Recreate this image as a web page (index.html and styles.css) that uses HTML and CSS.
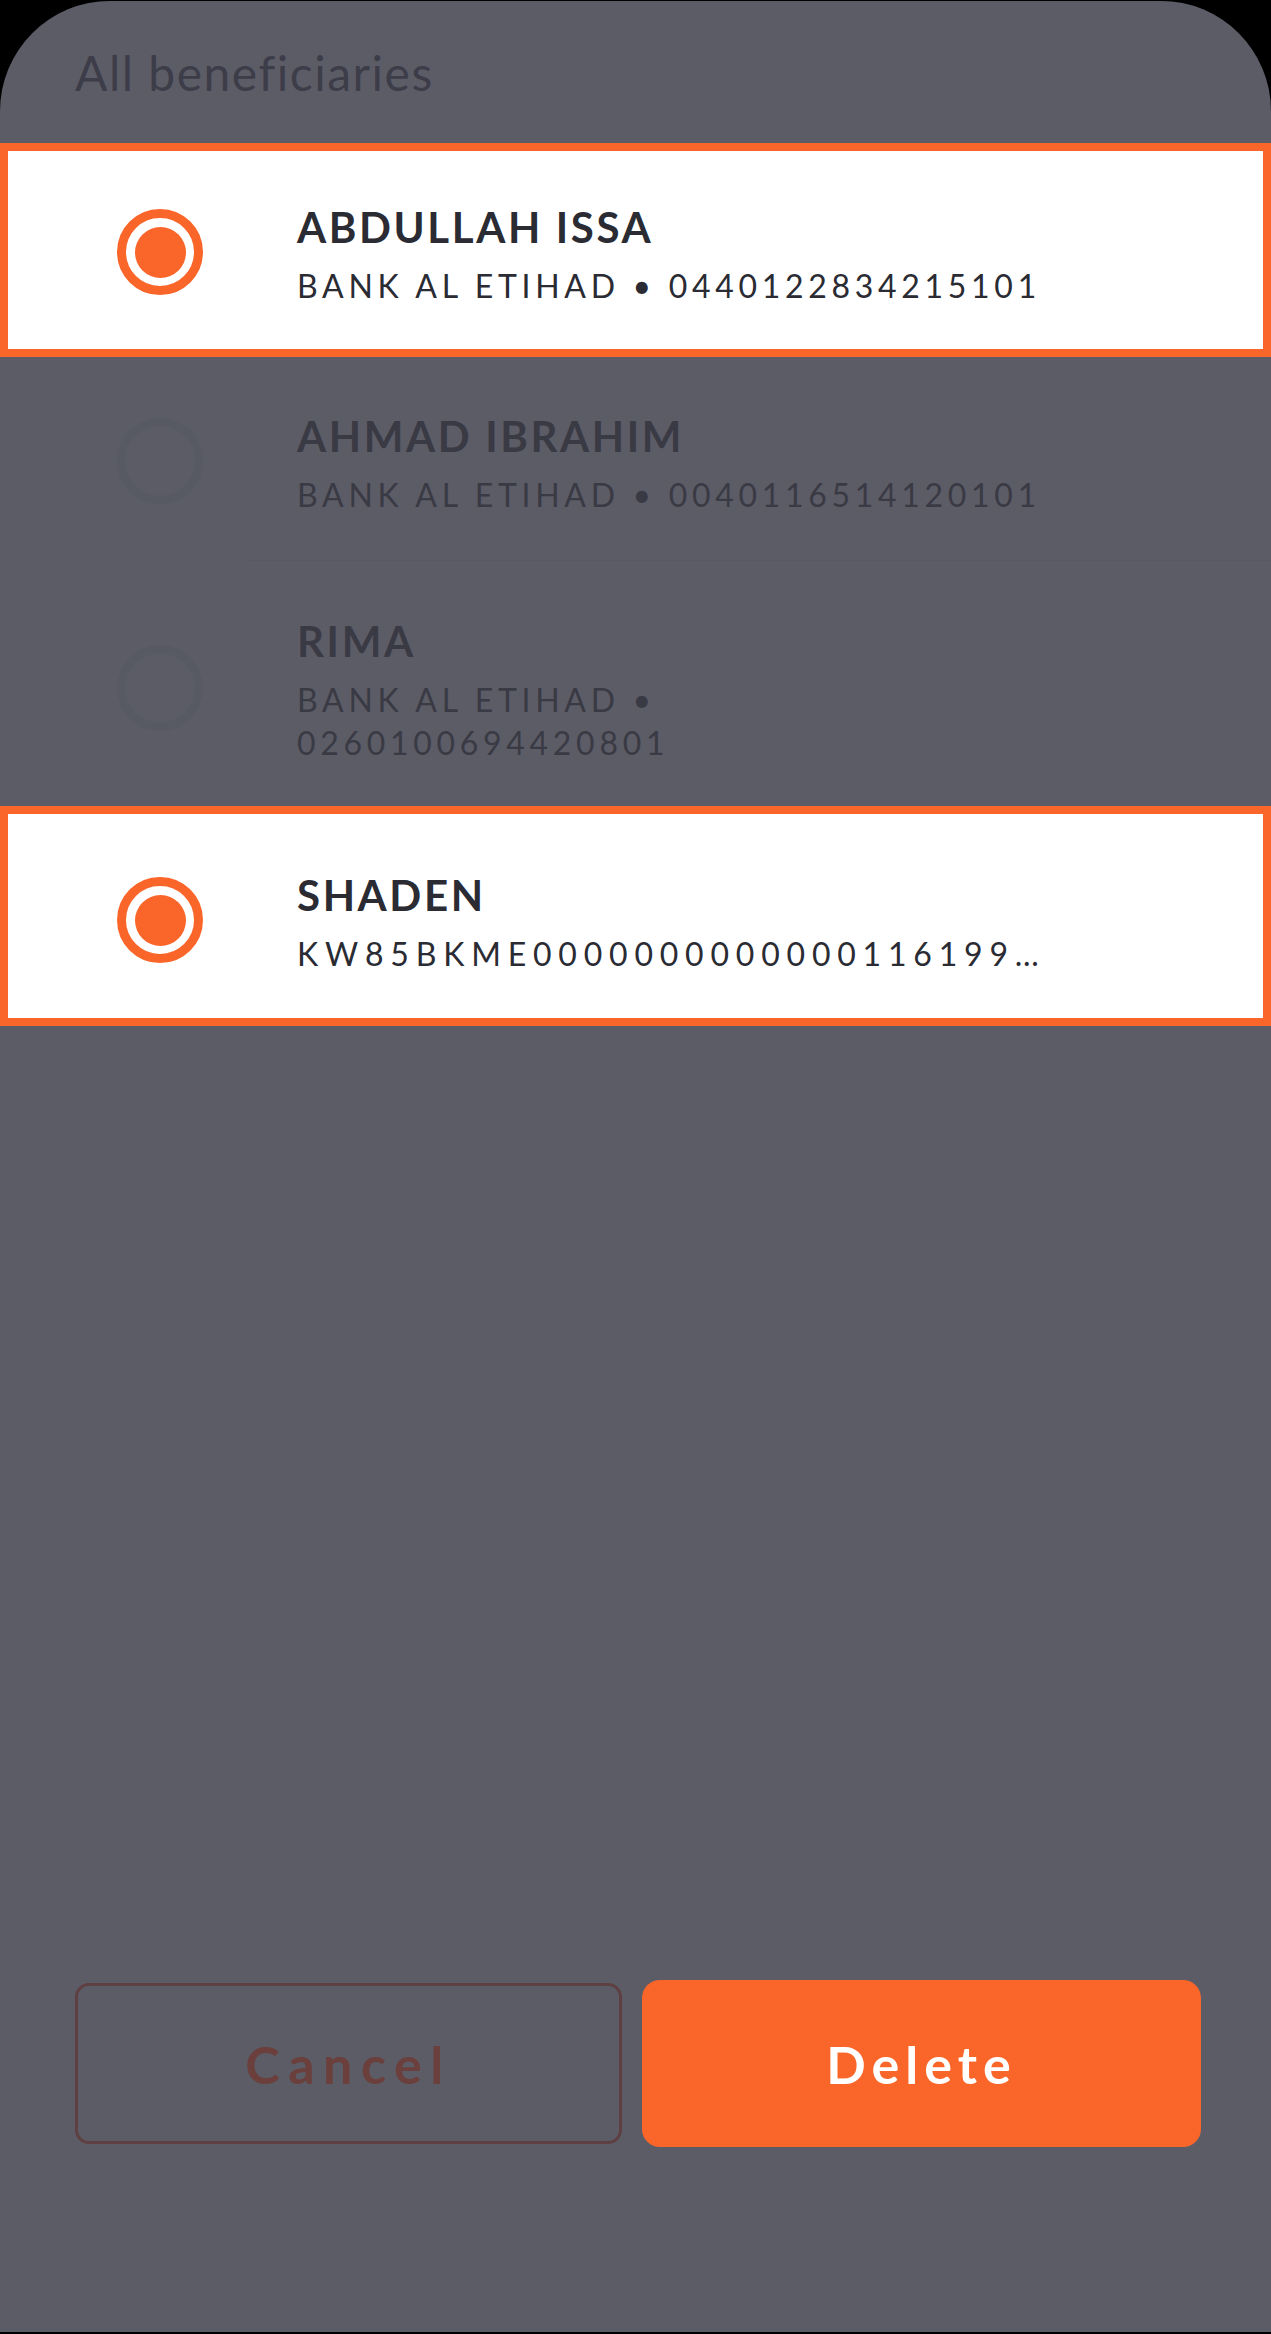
FILE: index.html
```html
<!DOCTYPE html>
<html lang="en">
<head>
<meta charset="utf-8">
<title>All beneficiaries</title>
<link rel="stylesheet" href="styles.css">
</head>
<body>
<main class="sheet">
  <h1 class="title">All beneficiaries</h1>
  <ul class="list">
    <li class="row selected row-1">
      <span class="radio on"></span>
      <div class="info">
        <div class="name">ABDULLAH ISSA</div>
        <div class="sub">BANK AL ETIHAD • 0440122834215101</div>
      </div>
    </li>
    <li class="row row-2">
      <span class="radio"></span>
      <div class="info">
        <div class="name">AHMAD IBRAHIM</div>
        <div class="sub">BANK AL ETIHAD • 0040116514120101</div>
      </div>
    </li>
    <li class="row row-3">
      <span class="radio"></span>
      <div class="info">
        <div class="name">RIMA</div>
        <div class="sub">BANK AL ETIHAD •<br>0260100694420801</div>
      </div>
    </li>
    <li class="row selected row-4">
      <span class="radio on"></span>
      <div class="info">
        <div class="name">SHADEN</div>
        <div class="sub iban">KW85BKME0000000000000116199…</div>
      </div>
    </li>
  </ul>
  <div class="actions">
    <button class="btn cancel" type="button">Cancel</button>
    <button class="btn delete" type="button">Delete</button>
  </div>
</main>
</body>
</html>
```

FILE: styles.css
```css
* { box-sizing: border-box; }

html, body {
  margin: 0;
  padding: 0;
  background: #000;
}

body {
  width: 1271px;
  height: 2334px;
  overflow: hidden;
  font-family: Lato, "Open Sans", sans-serif;
}

.sheet {
  margin-top: 1px;
  height: 2331px;
  background: #5c5c67;
  border-radius: 110px 110px 0 0;
  display: flex;
  flex-direction: column;
}

.title {
  margin: 43px 0 0 75px;
  font-size: 48px;
  line-height: 57px;
  font-weight: 400;
  color: #3d3d49;
  letter-spacing: 1.5px;
}

.list {
  list-style: none;
  margin: 42px 0 0 0;
  padding: 0;
}

.row {
  display: flex;
  align-items: center;
  padding-left: 117px;
}

.row-1 { padding-top: 59px; padding-bottom: 50px; }
.row-2 { padding-top: 54px; padding-bottom: 44px; border-bottom: 1px solid transparent; position: relative; }
.row-3 { padding-top: 55px; padding-bottom: 42px; }
.row-4 { padding-top: 64px; padding-bottom: 51px; }

.row-2::after {
  content: "";
  position: absolute;
  left: 248px;
  right: 0;
  bottom: -1px;
  height: 1px;
  background: #595964;
}

.selected {
  background: #fff;
  box-shadow: inset 0 0 0 8px #fa6629;
}

.radio {
  flex-shrink: 0;
  width: 86px;
  height: 86px;
  border-radius: 50%;
  border: 8px solid #575963;
  margin-right: 94px;
  margin-bottom: 5px;
  display: flex;
  align-items: center;
  justify-content: center;
}

.radio.on {
  border: 9px solid #fa6629;
}

.radio.on::after {
  content: "";
  width: 51px;
  height: 51px;
  border-radius: 50%;
  background: #fa6629;
}

.info {
  width: 760px;
  color: #3a3a44;
}

.selected .info { color: #2a2b33; }

.name {
  font-size: 42px;
  line-height: 50px;
  font-weight: 700;
  letter-spacing: 2.6px;
}

.sub {
  margin-top: 12px;
  font-size: 32px;
  line-height: 43px;
  font-weight: 400;
  letter-spacing: 4.7px;
}

.iban {
  white-space: nowrap;
  letter-spacing: 6.8px;
}

.actions {
  margin-top: auto;
  padding: 0 70px 185px 75px;
  display: flex;
  align-items: center;
}

.btn {
  font-family: Lato, "Open Sans", sans-serif;
  font-size: 52px;
  font-weight: 700;
  letter-spacing: 6px;
  padding: 0;
  cursor: pointer;
}

.cancel {
  width: 547px;
  height: 161px;
  background: transparent;
  border: 3px solid #5f4042;
  border-radius: 14px;
  color: #6b3f3b;
  letter-spacing: 8.5px;
}

.delete {
  width: 559px;
  height: 167px;
  margin-left: 20px;
  background: #fa6629;
  border: none;
  border-radius: 18px;
  color: #fff;
}
```
